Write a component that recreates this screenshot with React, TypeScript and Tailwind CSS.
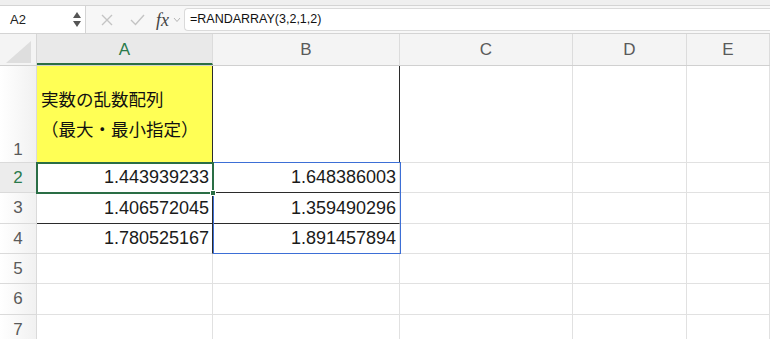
import React from "react";

const COLS = [
  { key: "A", w: "w-[176px]" },
  { key: "B", w: "w-[187px]" },
  { key: "C", w: "w-[173px]" },
  { key: "D", w: "w-[114px]" },
  { key: "E", w: "flex-1" },
];

const ROW_H = ["h-[97px]", "h-[30px]", "h-[31px]", "h-[30px]", "h-[30px]", "h-[31px]", "h-[30px]"];

const DATA: Record<string, string> = {
  A2: "1.443939233",
  B2: "1.648386003",
  A3: "1.406572045",
  B3: "1.359490296",
  A4: "1.780525167",
  B4: "1.891457894",
};

const font = "font-['Liberation_Sans','Noto_Sans_CJK_JP',sans-serif]";

function Toolbar() {
  return (
    <div className="bg-[#efefef] pt-[5px]">
      <div className="flex h-[29px] items-stretch border-y border-[#d4d4d4] bg-[#f7f7f7]">
        <div className="flex w-[86px] items-center justify-between border-r border-[#d4d4d4] bg-white pl-[10px] pr-[4px]">
          <span className="text-[13px] text-[#222]">A2</span>
          <div className="flex flex-col items-center gap-[3px]">
            <svg width="8" height="6" viewBox="0 0 8 6"><path d="M4 0 L8 6 L0 6 Z" fill="#555" /></svg>
            <svg width="8" height="6" viewBox="0 0 8 6"><path d="M0 0 L8 0 L4 6 Z" fill="#555" /></svg>
          </div>
        </div>
        <div className="flex items-center pl-[15px]">
          <svg width="12" height="12" viewBox="0 0 12 12">
            <path d="M1 1 L11 11 M11 1 L1 11" stroke="#c4c4c4" strokeWidth="1.4" fill="none" />
          </svg>
          <svg className="ml-[17px]" width="15" height="12" viewBox="0 0 15 12">
            <path d="M1 6 L5.5 10.5 L14 1" stroke="#c4c4c4" strokeWidth="1.4" fill="none" />
          </svg>
          <span className="ml-[11px] font-['Liberation_Serif',serif] text-[18px] italic leading-none text-[#444]">
            fx
          </span>
          <svg className="ml-[4px]" width="8" height="6" viewBox="0 0 8 6">
            <path d="M1 1 L4 4.5 L7 1" stroke="#b5b5b5" strokeWidth="1" fill="none" />
          </svg>
        </div>
        <div className="my-[2px] ml-[3px] flex flex-1 items-center rounded-l-[4px] border border-r-0 border-[#dadada] bg-white pl-[5px]">
          <span className="text-[12.5px] text-[#111]">=RANDARRAY(3,2,1,2)</span>
        </div>
      </div>
    </div>
  );
}

function HeaderRow() {
  return (
    <div className="flex h-[32px] border-b border-[#d0d0d0] bg-[#f4f4f4]">
      <div className="flex w-[37px] items-end justify-center border-r border-[#d6d6d6] pb-[1px]">
        <svg width="28" height="24" viewBox="0 0 28 24">
          <path d="M27 1 L27 23 L2 23 Z" fill="#dedede" />
        </svg>
      </div>
      {COLS.map((c) => {
        const sel = c.key === "A";
        return (
          <div
            key={c.key}
            className={`${c.w} flex items-center justify-center border-r border-[#dcdcdc] text-[17px] ${
              sel ? "border-b-2 border-b-[#2a6e45] bg-[#e9e9e9] pt-[2px] text-[#2a7a4b]" : "text-[#5a5a5a]"
            }`}
          >
            {c.key}
          </div>
        );
      })}
    </div>
  );
}

function cellBorder(col: string, row: number) {
  const parts: string[] = [];
  if (row === 1 && (col === "A" || col === "B")) parts.push("border-r-[#2b2b2b]");
  if (row >= 2 && row <= 4 && col === "A") parts.push("border-r-[#2b2b2b]");
  if (row >= 2 && row <= 3 && (col === "A" || col === "B")) parts.push("border-b-[#2b2b2b]");
  return parts.join(" ");
}

function Grid() {
  return (
    <div className="relative">
      {ROW_H.map((h, i) => {
        const row = i + 1;
        return (
          <div key={row} className={`flex ${h}`}>
            <div
              className={`flex w-[37px] justify-center border-r border-b border-[#dadada] bg-gradient-to-r from-white to-[#f1f1f1] text-[17px] ${
                row === 1 ? "items-end pb-[0px]" : "items-center"
              } ${row === 2 ? "bg-none bg-[#ececec] text-[#2a7a4b]" : "text-[#5a5a5a]"}`}
            >
              {row}
            </div>
            {COLS.map((c) => {
              const id = `${c.key}${row}`;
              const val = DATA[id];
              const isTitle = id === "A1";
              return (
                <div
                  key={id}
                  className={`${c.w} flex items-center border-r border-b border-[#e1e1e1] ${cellBorder(c.key, row)} ${
                    isTitle ? "bg-[#ffff55]" : "bg-white"
                  } ${val ? "justify-end pr-[3px]" : ""}`}
                >
                  {isTitle && (
                    <div className="pl-[4px] font-['Noto_Sans_CJK_JP',sans-serif] text-[17.5px] leading-[30px] text-[#111]">
                      <div>実数の乱数配列</div>
                      <div>（最大・最小指定）</div>
                    </div>
                  )}
                  {val && <span className="text-[18px] text-[#1a1a1a]">{val}</span>}
                </div>
              );
            })}
          </div>
        );
      })}
      {/* spill range outline B2:B4 */}
      <div className="pointer-events-none absolute left-[213px] top-[96px] h-[92px] w-[188px] border border-[#3d6fd6]" />
      {/* active cell A2 */}
      <div className="pointer-events-none absolute left-[36px] top-[96px] h-[32px] w-[178px] border-2 border-[#2a6e45]" />
      <div className="pointer-events-none absolute left-[210px] top-[124px] h-[6px] w-[6px] border border-white bg-[#2a6e45]" />
    </div>
  );
}

export default function App() {
  return (
    <div className={`h-[339px] w-[770px] overflow-hidden bg-white ${font}`}>
      <Toolbar />
      <HeaderRow />
      <Grid />
    </div>
  );
}
